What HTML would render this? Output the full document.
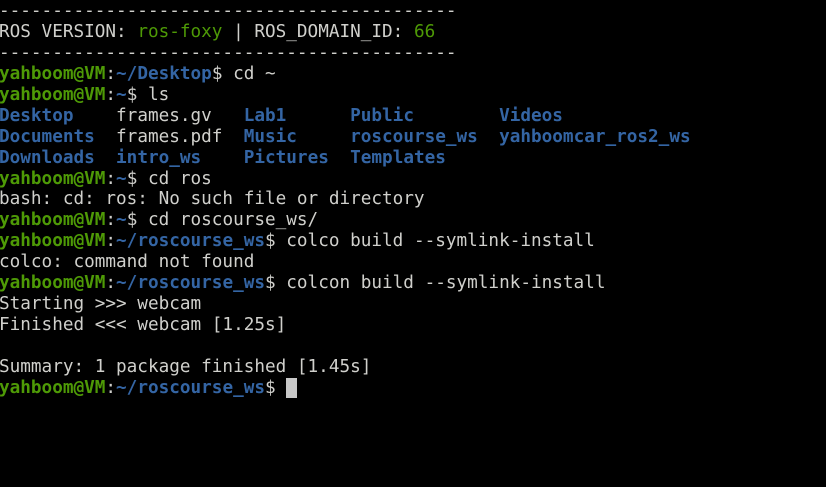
<!DOCTYPE html>
<html><head><meta charset="utf-8"><style>
html,body{margin:0;padding:0;background:#000;width:826px;height:487px;overflow:hidden}
pre{margin:0;position:absolute;left:-1px;top:1px;font-family:"DejaVu Sans Mono","Liberation Mono",monospace;font-size:17.68px;line-height:20.94px;color:#d0d0cc;letter-spacing:0}
.g{color:#4e9a06;font-weight:bold}.b{color:#3465a4;font-weight:bold}.gr{color:#4e9a06}
.c{background:#c8c8c8;color:#c8c8c8}
</style></head><body><pre>-------------------------------------------
ROS VERSION: <span class="gr">ros-foxy</span> | ROS_DOMAIN_ID: <span class="gr">66</span>
-------------------------------------------
<span class="g">yahboom@VM</span>:<span class="b">~/Desktop</span>$ cd ~
<span class="g">yahboom@VM</span>:<span class="b">~</span>$ ls
<span class="b">Desktop</span>    frames.gv   <span class="b">Lab1</span>      <span class="b">Public</span>        <span class="b">Videos</span>
<span class="b">Documents</span>  frames.pdf  <span class="b">Music</span>     <span class="b">roscourse_ws</span>  <span class="b">yahboomcar_ros2_ws</span>
<span class="b">Downloads</span>  <span class="b">intro_ws</span>    <span class="b">Pictures</span>  <span class="b">Templates</span>
<span class="g">yahboom@VM</span>:<span class="b">~</span>$ cd ros
bash: cd: ros: No such file or directory
<span class="g">yahboom@VM</span>:<span class="b">~</span>$ cd roscourse_ws/
<span class="g">yahboom@VM</span>:<span class="b">~/roscourse_ws</span>$ colco build --symlink-install
colco: command not found
<span class="g">yahboom@VM</span>:<span class="b">~/roscourse_ws</span>$ colcon build --symlink-install
Starting &gt;&gt;&gt; webcam
Finished &lt;&lt;&lt; webcam [1.25s]

Summary: 1 package finished [1.45s]
<span class="g">yahboom@VM</span>:<span class="b">~/roscourse_ws</span>$ <span class="c"> </span></pre></body></html>
